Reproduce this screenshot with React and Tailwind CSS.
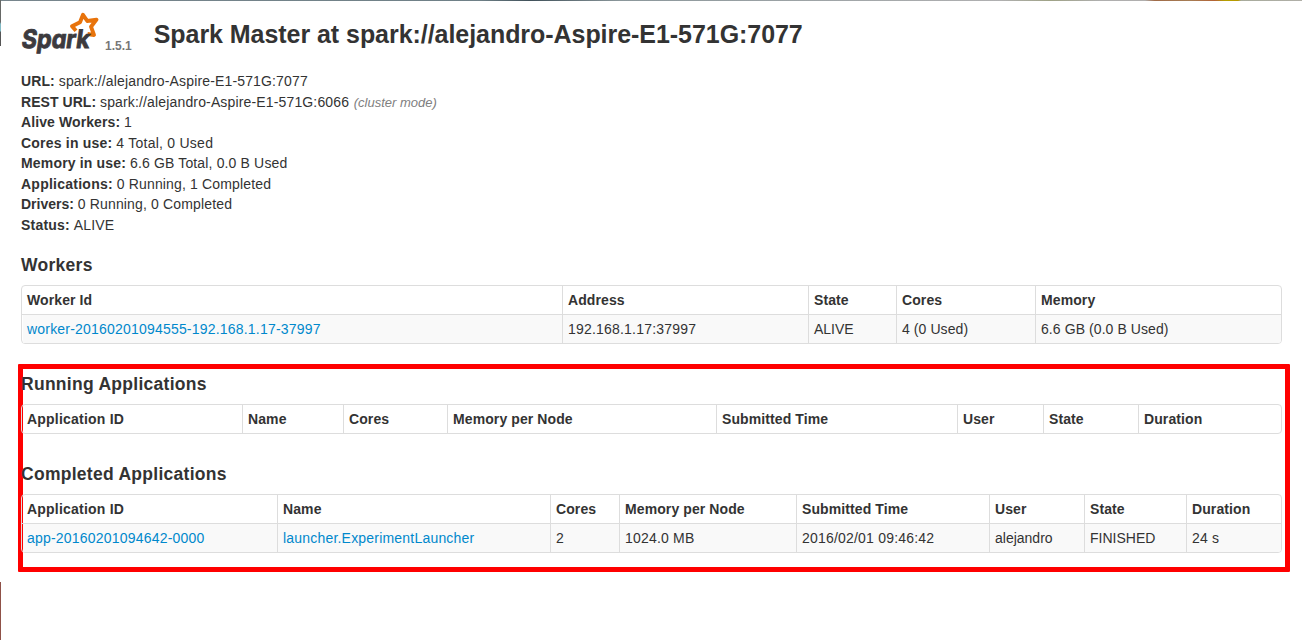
import React from "react";

const summary = [
  ["URL:", "tracking-[0.1px]", "spark://alejandro-Aspire-E1-571G:7077"],
  ["REST URL:", "tracking-[0.05px]", "spark://alejandro-Aspire-E1-571G:6066", "(cluster mode)"],
  ["Alive Workers:", "tracking-[0.1px]", "1"],
  ["Cores in use:", "tracking-[0.21px]", "4 Total, 0 Used"],
  ["Memory in use:", "tracking-[0.17px]", "6.6 GB Total, 0.0 B Used"],
  ["Applications:", "tracking-[0.25px]", "0 Running, 1 Completed"],
  ["Drivers:", "tracking-[0px]", "0 Running, 0 Completed"],
  ["Status:", "tracking-[0.2px]", "ALIVE"],
];

const appHeaders = ["Application ID", "Name", "Cores", "Memory per Node", "Submitted Time", "User", "State", "Duration"];

const star = "M55 18.7 L51 14.3 L59 10.3 L62 2.8 L66.3 9 L75.5 7.6 L70 14.7 L73 23 L66.5 22";

function SparkLogo() {
  return (
    <svg width="80" height="44" viewBox="0 0 80 44" className="block">
      <path d={star} fill="none" stroke="#e8730b" strokeWidth="3.9" strokeLinejoin="round" />
      <text
        x="0"
        y="0"
        transform="translate(-0.3 36.2) skewX(-8)"
        textLength="68"
        lengthAdjust="spacingAndGlyphs"
        fontFamily="Inter, sans-serif"
        fontWeight="700"
        fontSize="25.5"
        fill="#3c3a3e"
        stroke="#3c3a3e"
        strokeWidth="0.9"
        className="[font-feature-settings:'cv11'_1]"
      >
        Spark
      </text>
    </svg>
  );
}

function cellTracking(v, isLink) {
  if (v.includes("(")) return "tracking-[0.08px]";
  return isLink || /\d/.test(v) ? "tracking-[0.2px]" : "";
}

function Table({ cols, headers, row, links = 0 }) {
  return (
    <div className="w-[1261px] rounded-[4px] border border-[#ddd]">
      <div className={`grid h-[28px] ${cols}`}>
        {headers.map((h, i) => (
          <div
            key={h}
            className={`whitespace-nowrap pl-[5px] pt-[4px] font-bold leading-5 ${h === "Application ID" ? "tracking-[0.22px]" : "tracking-[0.1px]"} ${i ? "border-l border-[#ddd]" : ""}`}
          >
            {h}
          </div>
        ))}
      </div>
      {row && (
        <div className={`grid h-[29px] border-t border-[#ddd] ${cols}`}>
          {row.map((v, i) => (
            <div
              key={i}
              className={`whitespace-nowrap pt-[4px] leading-5 bg-[#f9f9f9] ${cellTracking(v, i < links)} ${i ? "border-l border-[#ddd] pl-[5px]" : "ml-px pl-[4px]"} ${i === row.length - 1 ? "rounded-br-[3px]" : ""} ${i < links ? "text-[#0088cc]" : ""}`}
            >
              {v}
            </div>
          ))}
        </div>
      )}
    </div>
  );
}

function Heading({ children }) {
  return <h4 className="text-[17.5px] font-bold leading-5 tracking-[0.28px]">{children}</h4>;
}

export default function App() {
  return (
    <div className="relative h-[640px] w-[1302px] overflow-hidden bg-white font-['Liberation_Sans',Arial,sans-serif] text-[14px] text-[#333]">
      <div className="absolute left-0 top-0 h-px w-full bg-[linear-gradient(90deg,#78868d_0px,#6f8087_480px,#40515a_530px,#8b979b_620px,#b0b0b1_1000px,#9fa286_1050px,#afafaf_1100px,#b0afae_1145px,#a06b48_1155px,#a67d55_1190px,#b46334_1215px,#b5a000_1225px,#b79800_1238px,#a8ab9c_1241px,#b0afa8_1302px)]" />
      <div className="absolute left-0 top-0 h-[46px] w-px bg-[linear-gradient(#666866_0px,#666866_22px,#82bac5_24px,#82bac5_31px,#555_32px)]" />
      <div className="absolute bottom-0 left-0 h-[58px] w-px bg-[#8f5148]" />

      <header className="flex h-[71px] pl-[21px] pt-[12px]">
        <SparkLogo />
        <span className="ml-[4px] mt-[24px] text-[12px] font-bold leading-5 text-[#777]">1.5.1</span>
        <h1 className="ml-[22px] mt-[2px] whitespace-nowrap text-[25px] font-bold leading-[40px] tracking-[-0.05px]">
          Spark Master at spark://alejandro-Aspire-E1-571G:7077
        </h1>
      </header>

      <ul className="pl-[21px]">
        {summary.map(([label, tracking, value, note]) => (
          <li key={label} className="h-[20.5px] whitespace-nowrap leading-5">
            <strong className={tracking}>{label}</strong>{" "}
            <span className={value.startsWith("4") ? "tracking-[0.25px]" : "tracking-[0.15px]"}>{value}</span>
            {note && <em className="ml-px text-[13px] text-[#808080]"> {note}</em>}
          </li>
        ))}
      </ul>

      <section className="ml-[21px] mt-[20px]">
        <Heading>Workers</Heading>
        <div className="mt-[10px]">
          <Table
            cols="grid-cols-[540px_246px_88px_139px_1fr]"
            headers={["Worker Id", "Address", "State", "Cores", "Memory"]}
            row={["worker-20160201094555-192.168.1.17-37997", "192.168.1.17:37997", "ALIVE", "4 (0 Used)", "6.6 GB (0.0 B Used)"]}
            links={1}
          />
        </div>
      </section>

      <div className="ml-[18px] mt-[20px] h-[208px] w-[1272px] rounded-[1px] border-[5px] border-[#ff0000]">
        <section className="-ml-[2px] pt-[5px]">
          <Heading>Running Applications</Heading>
          <div className="mt-[10px]">
            <Table cols="grid-cols-[220px_101px_104px_269px_241px_86px_95px_1fr]" headers={appHeaders} />
          </div>
        </section>
        <section className="-ml-[2px] mt-[30px]">
          <Heading>Completed Applications</Heading>
          <div className="mt-[10px]">
            <Table
              cols="grid-cols-[255px_273px_69px_177px_193px_95px_102px_1fr]"
              headers={appHeaders}
              row={["app-20160201094642-0000", "launcher.ExperimentLauncher", "2", "1024.0 MB", "2016/02/01 09:46:42", "alejandro", "FINISHED", "24 s"]}
              links={2}
            />
          </div>
        </section>
      </div>
    </div>
  );
}
